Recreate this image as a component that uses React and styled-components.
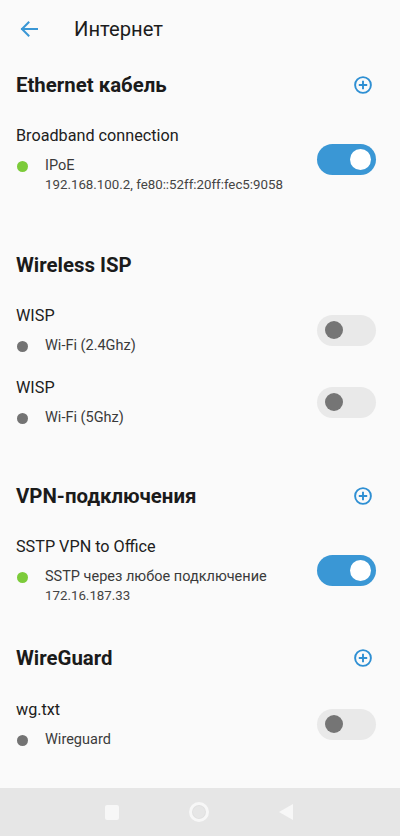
import React from "react";
import styled, { createGlobalStyle } from "styled-components";

const GlobalStyle = createGlobalStyle`
  html, body {
    margin: 0;
    padding: 0;
    background: #fafafa;
  }
  body {
    font-family: Roboto, "Noto Sans", sans-serif;
    color: #1f1f1f;
  }
`;

const Screen = styled.div`
  width: 400px;
  height: 836px;
  display: flex;
  flex-direction: column;
  background: #fafafa;
  overflow: hidden;
`;

const Content = styled.div`
  flex: 1;
  display: flex;
  flex-direction: column;
`;

const TopBar = styled.div`
  height: 57px;
  display: flex;
  align-items: center;
  padding-left: 19px;
`;

const BackButton = styled.div`
  width: 20px;
  height: 20px;
  display: flex;
  align-items: center;
  justify-content: center;
`;

const Title = styled.h1`
  margin: 0 0 0 35px;
  font-size: 20.2px;
  font-weight: 400;
  color: #1c1c1c;
`;

const Section = styled.section`
  display: flex;
  flex-direction: column;
  margin-bottom: ${(p) => p.$after || 0}px;
`;

const SectionHead = styled.div`
  height: 56px;
  display: flex;
  align-items: center;
  justify-content: space-between;
  padding: 0 28px 0 16px;
`;

const SectionTitle = styled.h2`
  margin: 0;
  font-size: 20.4px;
  font-weight: 700;
  color: #1b1b1b;
`;

const Item = styled.div`
  display: flex;
  align-items: center;
  justify-content: space-between;
  padding: ${(p) => p.$top || 12}px 24px 10px 16px;
`;

const ItemText = styled.div`
  display: flex;
  flex-direction: column;
`;

const ItemName = styled.div`
  font-size: 16.2px;
  line-height: 22px;
  color: #202020;
`;

const StatusRow = styled.div`
  display: flex;
  align-items: flex-start;
  margin-top: 9px;
`;

const Dot = styled.span`
  width: 11px;
  height: 11px;
  border-radius: 50%;
  margin: 5px 17px 0 1px;
  flex-shrink: 0;
  background: ${(p) => (p.$on ? "#7ccb3a" : "#737373")};
`;

const StatusText = styled.div`
  display: flex;
  flex-direction: column;
`;

const Kind = styled.div`
  font-size: 14.5px;
  line-height: 19px;
  color: #3a3a3a;
`;

const Address = styled.div`
  font-size: 13.3px;
  line-height: 19px;
  color: #444;
`;

const Track = styled.div`
  width: 59px;
  height: 31px;
  border-radius: 16px;
  background: ${(p) => (p.$on ? "#3a97d5" : "#e9e9e9")};
  display: flex;
  align-items: center;
  justify-content: ${(p) => (p.$on ? "flex-end" : "flex-start")};
  padding: 0 ${(p) => (p.$on ? 5 : 8)}px;
  box-sizing: border-box;
  flex-shrink: 0;
`;

const Knob = styled.div`
  width: ${(p) => (p.$on ? 21 : 18)}px;
  height: ${(p) => (p.$on ? 21 : 18)}px;
  border-radius: 50%;
  background: ${(p) => (p.$on ? "#ffffff" : "#757575")};
`;

const NavBar = styled.div`
  height: 48px;
  background: #e6e6e6;
  display: flex;
  align-items: center;
  justify-content: center;
  gap: 70px;
  padding-right: 2px;
`;

const NavSquare = styled.div`
  width: 14px;
  height: 15px;
  border-radius: 2px;
  background: #f7f7f7;
`;

const NavCircle = styled.div`
  width: 14px;
  height: 14px;
  border-radius: 50%;
  border: 3px solid #f7f7f7;
  box-shadow: inset 0 0 0 1px #e0e0e0;
`;

const NavBack = styled.div`
  width: 0;
  height: 0;
  border-top: 8px solid transparent;
  border-bottom: 8px solid transparent;
  border-right: 14px solid #f7f7f7;
`;

const Arrow = () => (
  <svg width="18" height="16" viewBox="0 0 18 16" fill="none">
    <path
      d="M17 8H2M8.5 1.5L2 8l6.5 6.5"
      stroke="#3a97d5"
      strokeWidth="2"
      strokeLinecap="square"
    />
  </svg>
);

const PlusCircle = () => (
  <svg width="18" height="18" viewBox="0 0 18 18" fill="none">
    <circle cx="9" cy="9" r="7.9" stroke="#2e8fd3" strokeWidth="1.9" />
    <path d="M9 4.8v8.4M4.8 9h8.4" stroke="#2e8fd3" strokeWidth="1.9" />
  </svg>
);

const Toggle = ({ on }) => (
  <Track $on={on}>
    <Knob $on={on} />
  </Track>
);

const Connection = ({ name, kind, address, on, top }) => (
  <Item $top={top}>
    <ItemText>
      <ItemName>{name}</ItemName>
      <StatusRow>
        <Dot $on={on} />
        <StatusText>
          <Kind>{kind}</Kind>
          {address && <Address>{address}</Address>}
        </StatusText>
      </StatusRow>
    </ItemText>
    <Toggle on={on} />
  </Item>
);

export default function App() {
  return (
    <>
      <GlobalStyle />
      <Screen>
        <Content>
          <TopBar>
            <BackButton>
              <Arrow />
            </BackButton>
            <Title>Интернет</Title>
          </TopBar>

          <Section $after={33}>
            <SectionHead>
              <SectionTitle>Ethernet кабель</SectionTitle>
              <PlusCircle />
            </SectionHead>
            <Connection
              name="Broadband connection"
              kind="IPoE"
              address="192.168.100.2, fe80::52ff:20ff:fec5:9058"
              on
            />
          </Section>

          <Section $after={31}>
            <SectionHead>
              <SectionTitle>Wireless ISP</SectionTitle>
            </SectionHead>
            <Connection name="WISP" kind="Wi-Fi (2.4Ghz)" />
            <Connection name="WISP" kind="Wi-Fi (5Ghz)" />
          </Section>

          <Section $after={15}>
            <SectionHead>
              <SectionTitle>VPN-подключения</SectionTitle>
              <PlusCircle />
            </SectionHead>
            <Connection
              name="SSTP VPN to Office"
              kind="SSTP через любое подключение"
              address="172.16.187.33"
              on
            />
          </Section>

          <Section>
            <SectionHead>
              <SectionTitle>WireGuard</SectionTitle>
              <PlusCircle />
            </SectionHead>
            <Connection name="wg.txt" kind="Wireguard" top={13} />
          </Section>
        </Content>

        <NavBar>
          <NavSquare />
          <NavCircle />
          <NavBack />
        </NavBar>
      </Screen>
    </>
  );
}
